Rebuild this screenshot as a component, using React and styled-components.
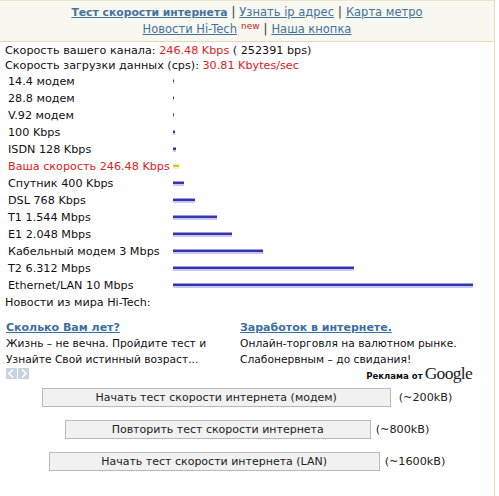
import React from 'react';
import styled, { createGlobalStyle } from 'styled-components';

const GlobalStyle = createGlobalStyle`
  html, body {
    margin: 0;
    padding: 0;
    background: #ffffff;
  }
  body {
    font-family: "DejaVu Sans", sans-serif;
    font-size: 11.2px;
    color: #111;
  }
`;

const Page = styled.div`
  width: 495px;
  height: 496px;
  border-right: 1px solid #ead9bf;
  box-sizing: border-box;
`;

const Header = styled.div`
  background: #f9f8f0;
  border-top: 1px solid #ede5d2;
  border-bottom: 1px solid #e6d6b8;
  text-align: center;
  padding: 3px 0 3px;
  line-height: 17px;
  font-size: 11.5px;
`;

const NavLink = styled.a`
  color: #43729e;
  text-decoration: underline;
  font-weight: ${p => (p.$active ? 'bold' : 'normal')};
  font-size: ${p => (p.$active ? '10.8px' : 'inherit')};
  cursor: pointer;
`;

const Sep = styled.span`
  color: #333;
  margin: 0 4px;
`;

const New = styled.sup`
  color: #d32020;
  font-size: 9px;
  margin-left: 4px;
  vertical-align: 4px;
  line-height: 0;
`;

const Body = styled.div`
  padding: 1px 0 0 5px;
`;

const InfoLine = styled.div`
  line-height: 15px;
`;

const Red = styled.span`
  color: #e0201c;
`;

const Rows = styled.div`
  display: grid;
  grid-template-columns: 168px 1fr;
  grid-auto-rows: 17px;
`;

const Label = styled.div`
  padding-left: 3px;
  line-height: 17px;
  color: ${p => (p.$mine ? '#e0201c' : '#111')};
  white-space: nowrap;
`;

const BarCell = styled.div`
  display: flex;
  align-items: center;
`;

const Bar = styled.div`
  height: 5px;
  background: ${p =>
    p.$mine
      ? 'linear-gradient(#f3eea0 0, #f3eea0 1px, #d8c630 1px, #d8c630 3px, #f6f2b8 3px)'
      : 'linear-gradient(#9a9ae0 0, #9a9ae0 1px, #3434b0 1px, #3434b0 3px, #c8c8f6 3px)'};
`;

const NewsTitle = styled.div`
  line-height: 17px;
`;

const Ads = styled.div`
  margin-top: 9px;
  display: grid;
  grid-template-columns: 234px 1fr;
  padding-left: 1px;
`;

const Ad = styled.div`
  line-height: 15.5px;
`;

const AdTitle = styled.a`
  display: block;
  color: #3b6fa0;
  font-weight: bold;
  font-size: 11px;
  text-decoration: underline;
  line-height: 16px;
  cursor: pointer;
`;

const AdText = styled.div`
  font-size: 10.7px;
  color: #111;
`;

const AdFooter = styled.div`
  display: flex;
  justify-content: space-between;
  align-items: center;
  margin-top: -2px;
  padding: 0 22px 0 1px;
  height: 16px;
`;

const Arrows = styled.div`
  display: flex;
  gap: 1px;
`;

const ArrowBox = styled.span`
  width: 11px;
  height: 11px;
  background: #c7d3df;
  display: flex;
  align-items: center;
  justify-content: center;
`;

const AdsBy = styled.div`
  display: flex;
  align-items: baseline;
  gap: 2px;
  font-family: "DejaVu Sans Condensed", "DejaVu Sans", sans-serif;
  font-size: 9.5px;
  font-weight: bold;
  color: #111;
`;

const GoogleWord = styled.span`
  font-family: "Liberation Serif", serif;
  font-weight: normal;
  font-size: 17.5px;
  color: #222;
  letter-spacing: -0.7px;
`;

const Buttons = styled.div`
  display: flex;
  flex-direction: column;
  gap: 13px;
  margin-top: 7px;
  padding-right: 5px;
`;

const ButtonRow = styled.div`
  display: flex;
  justify-content: center;
  align-items: center;
  gap: ${p => p.$gap}px;
`;

const TestButton = styled.button`
  width: ${p => p.$w}px;
  height: 19px;
  background: #f1f1f1;
  border: 1px solid #b9b9b9;
  font-family: "DejaVu Sans", sans-serif;
  font-size: 11px;
  color: #222;
  padding: 0;
  cursor: pointer;
`;

const Size = styled.span`
  color: #222;
`;

const speeds = [
  { label: '14.4 модем', w: 1 },
  { label: '28.8 модем', w: 1 },
  { label: 'V.92 модем', w: 1 },
  { label: '100 Kbps', w: 2 },
  { label: 'ISDN 128 Kbps', w: 3 },
  { label: 'Ваша скорость 246.48 Kbps', w: 6, mine: true },
  { label: 'Спутник 400 Kbps', w: 11 },
  { label: 'DSL 768 Kbps', w: 22 },
  { label: 'T1 1.544 Mbps', w: 44 },
  { label: 'E1 2.048 Mbps', w: 59 },
  { label: 'Кабельный модем 3 Mbps', w: 90 },
  { label: 'T2 6.312 Mbps', w: 181 },
  { label: 'Ethernet/LAN 10 Mbps', w: 300 },
];

const tests = [
  { text: 'Начать тест скорости интернета (модем)', size: '(~200kB)', w: 349, gap: 8 },
  { text: 'Повторить тест скорости интернета', size: '(~800kB)', w: 306, gap: 5 },
  { text: 'Начать тест скорости интернета (LAN)', size: '(~1600kB)', w: 331, gap: 5 },
];

function Chevron({ dir }) {
  const d = dir === 'left' ? 'M7 1.5 L3 5.5 L7 9.5' : 'M4 1.5 L8 5.5 L4 9.5';
  return (
    <svg width="11" height="11" viewBox="0 0 11 11">
      <path d={d} fill="none" stroke="#fff" strokeWidth="1.6" />
    </svg>
  );
}

export default function App() {
  return (
    <Page>
      <GlobalStyle />
      <Header>
        <div>
          <NavLink $active>Тест скорости интернета</NavLink>
          <Sep>|</Sep>
          <NavLink>Узнать ip адрес</NavLink>
          <Sep>|</Sep>
          <NavLink>Карта метро</NavLink>
        </div>
        <div>
          <NavLink>Новости Hi-Tech</NavLink>
          <New>new</New>
          <Sep>|</Sep>
          <NavLink>Наша кнопка</NavLink>
        </div>
      </Header>
      <Body>
        <InfoLine>
          Скорость вашего канала: <Red>246.48 Kbps</Red> ( 252391 bps)
        </InfoLine>
        <InfoLine>
          Скорость загрузки данных (cps): <Red>30.81 Kbytes/sec</Red>
        </InfoLine>
        <Rows>
          {speeds.map(s => (
            <React.Fragment key={s.label}>
              <Label $mine={s.mine}>{s.label}</Label>
              <BarCell>
                <Bar $mine={s.mine} style={{ width: s.w }} />
              </BarCell>
            </React.Fragment>
          ))}
        </Rows>
        <NewsTitle>Новости из мира Hi-Tech:</NewsTitle>
        <Ads>
          <Ad>
            <AdTitle>Сколько Вам лет?</AdTitle>
            <AdText>Жизнь – не вечна. Пройдите тест и</AdText>
            <AdText>Узнайте Свой истинный возраст...</AdText>
          </Ad>
          <Ad>
            <AdTitle>Заработок в интернете.</AdTitle>
            <AdText>Онлайн-торговля на валютном рынке.</AdText>
            <AdText>Слабонервным – до свидания!</AdText>
          </Ad>
        </Ads>
        <AdFooter>
          <Arrows>
            <ArrowBox><Chevron dir="left" /></ArrowBox>
            <ArrowBox><Chevron dir="right" /></ArrowBox>
          </Arrows>
          <AdsBy>
            Реклама от <GoogleWord>Google</GoogleWord>
          </AdsBy>
        </AdFooter>
        <Buttons>
          {tests.map(t => (
            <ButtonRow key={t.text} $gap={t.gap}>
              <TestButton $w={t.w}>{t.text}</TestButton>
              <Size>{t.size}</Size>
            </ButtonRow>
          ))}
        </Buttons>
      </Body>
    </Page>
  );
}
